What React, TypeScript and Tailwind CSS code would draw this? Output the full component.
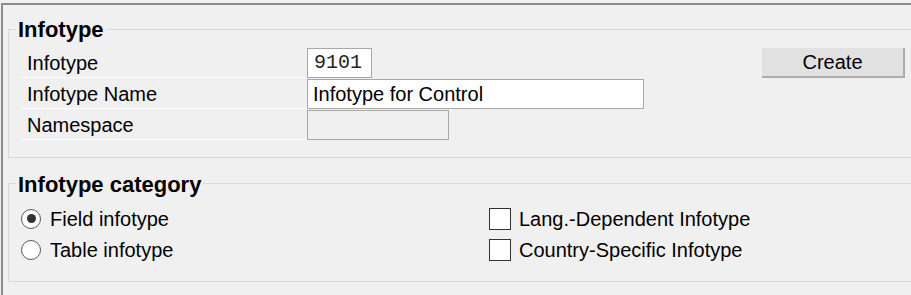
import { useState } from 'react'

const labelCell =
  'w-[286px] h-[30px] flex items-center pl-[6px] border-b border-white'

function Radio({ checked, label, onClick }: { checked: boolean; label: string; onClick: () => void }) {
  return (
    <button onClick={onClick} className="h-[31px] flex items-center gap-[9px] text-left">
      <span className="w-[20px] h-[20px] rounded-full border border-[#5a5a5a] bg-white flex items-center justify-center">
        {checked && <span className="w-[9px] h-[9px] rounded-full bg-[#333]" />}
      </span>
      <span>{label}</span>
    </button>
  )
}

function Check({ checked, label, onClick }: { checked: boolean; label: string; onClick: () => void }) {
  return (
    <button onClick={onClick} className="h-[31px] flex items-center gap-[8px] text-left">
      <span className="w-[22px] h-[22px] border border-[#333] bg-white flex items-center justify-center text-[14px] leading-none">
        {checked ? '✓' : ''}
      </span>
      <span>{label}</span>
    </button>
  )
}

export default function App() {
  const [category, setCategory] = useState<'field' | 'table'>('field')
  const [langDep, setLangDep] = useState(false)
  const [countrySpec, setCountrySpec] = useState(false)
  const [name, setName] = useState('Infotype for Control')

  return (
    <div
      className="w-[911px] h-[295px] bg-[#f0f0f0] text-black text-[20px] overflow-hidden"
      style={{ fontFamily: '"Liberation Sans", Arial, sans-serif' }}
    >
      <div className="mt-[3px] ml-[1px] h-[292px] border-t-2 border-l-2 border-[#8c8c8c]">
        {/* Infotype group */}
        <div className="ml-[5px] mt-[24px] border border-r-0 border-[#d9d9d9] pb-[17px]">
          <div className="-mt-[11px] ml-[7px] w-fit px-[2px] bg-[#f0f0f0] h-[22px] leading-[22px] text-[22px] font-bold">
            Infotype
          </div>
          <div className="mt-[7px] ml-[12px] flex flex-col gap-[1px]">
            <div className="flex items-center">
              <div className={labelCell}>Infotype</div>
              <div
                className="w-[65px] h-[30px] border border-[#a8a8a8] bg-white flex items-center pl-[6px] text-[#222] text-[20px]"
                style={{ fontFamily: '"Liberation Mono", "Courier New", monospace' }}
              >
                9101
              </div>
              <button className="ml-auto mr-[6px] w-[143px] h-[30px] bg-[#e1e1e1] border-r-2 border-b-2 border-[#adadad] flex items-center justify-center">
                Create
              </button>
            </div>
            <div className="flex items-center">
              <div className={labelCell}>Infotype Name</div>
              <input
                value={name}
                onChange={(e) => setName(e.target.value)}
                className="w-[337px] h-[30px] border border-[#a8a8a8] bg-white px-[5px] outline-none"
              />
            </div>
            <div className="flex items-center">
              <div className={labelCell}>Namespace</div>
              <div className="w-[142px] h-[30px] border border-[#a8a8a8] bg-[#f0f0f0]" />
            </div>
          </div>
        </div>

        {/* Infotype category group */}
        <div className="ml-[5px] mt-[25px] border border-r-0 border-[#d9d9d9] pb-[16px]">
          <div className="-mt-[10px] ml-[7px] w-fit px-[2px] bg-[#f0f0f0] h-[22px] leading-[22px] text-[22px] font-bold">
            Infotype category
          </div>
          <div className="mt-[7px] ml-[12px] flex">
            <div className="w-[468px] flex flex-col">
              <Radio checked={category === 'field'} label="Field infotype" onClick={() => setCategory('field')} />
              <Radio checked={category === 'table'} label="Table infotype" onClick={() => setCategory('table')} />
            </div>
            <div className="flex flex-col">
              <Check checked={langDep} label="Lang.-Dependent Infotype" onClick={() => setLangDep(!langDep)} />
              <Check checked={countrySpec} label="Country-Specific Infotype" onClick={() => setCountrySpec(!countrySpec)} />
            </div>
          </div>
        </div>
      </div>
    </div>
  )
}
